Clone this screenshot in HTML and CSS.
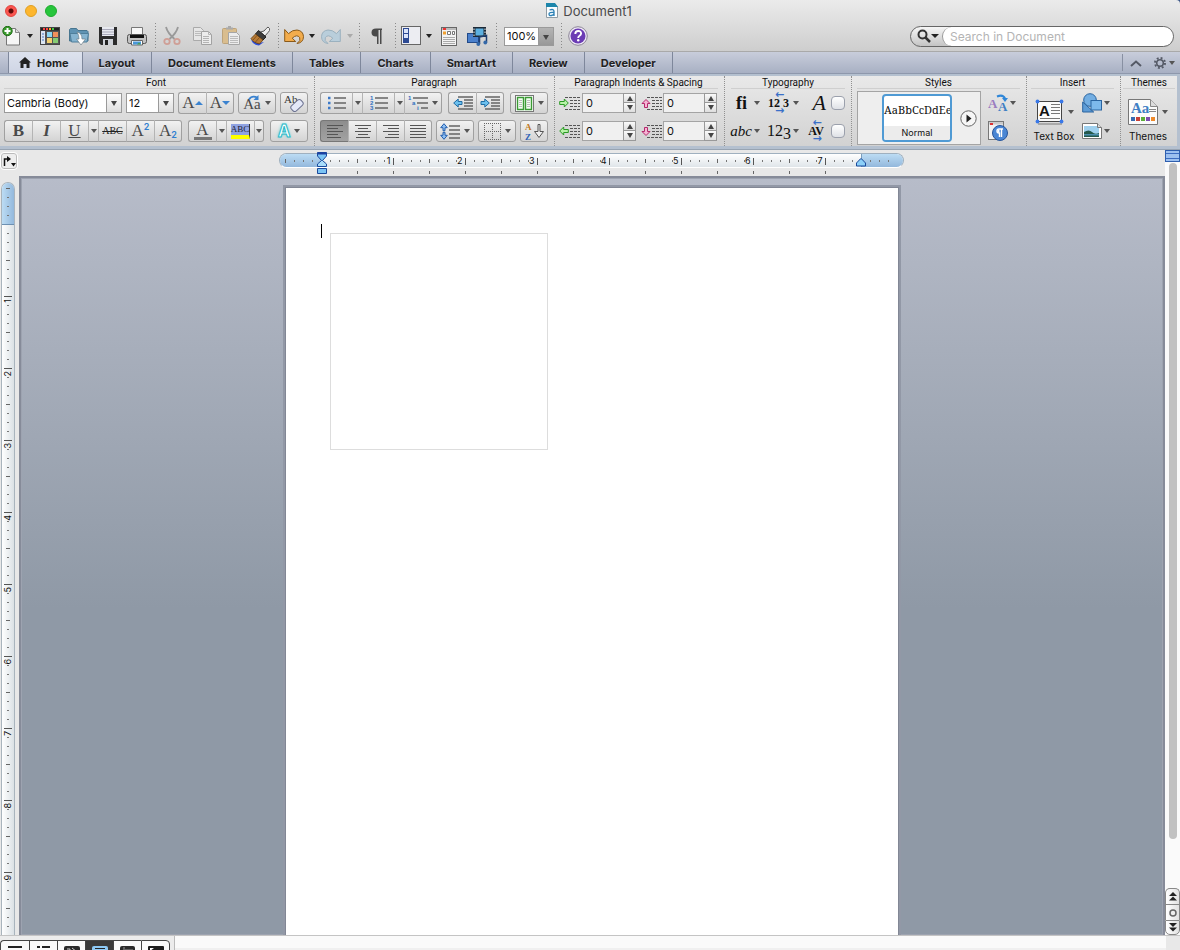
FILE: index.html
```html
<!DOCTYPE html>
<html lang="en">
<head>
    <meta charset="UTF-8">
    <meta name="viewport" content="width=device-width, initial-scale=1.0">
    <title>Document1</title>
    <link rel="stylesheet" href="styles.css">
</head>
<body>
<div class="window">

    <header class="titlebar">
        <div class="lights">
            <button class="light red" aria-label="Close"></button>
            <button class="light yellow" aria-label="Minimize"></button>
            <button class="light green" aria-label="Zoom"></button>
        </div>
        <div class="doc-title">
            <svg width="12" height="15" viewBox="0 0 12 15"><path d="M.5.5h8l3 3v11H.5z" fill="#fafdff" stroke="#8f9ba3"/><path d="M0 0h9l3 4H0z" fill="#1d86ab"/><path d="M3.500 7q4.500-1.500 4.500 1.500V13M8 9.500q-5-.5-5 1.500t2.500 1.500T8 10.500" fill="none" stroke="#2b80b5" stroke-width="1.300"/></svg>
            <span>Document1</span>
        </div>
        <div></div>
    </header>

    <div class="toolbar">
        <button class="tool first" aria-label="New">
            <svg width="20" height="20" viewBox="0 0 20 20"><path d="M4.500 2.500h9l4 4v12.500h-13z" fill="#f6f6f6" stroke="#777"/><path d="M13.500 2.500v4h4" fill="#ddd" stroke="#888"/><circle cx="5.500" cy="5" r="4.700" fill="#3a9a2c" stroke="#1f6b18"/><path d="M5.500 2v6M2.500 5h6" stroke="#fff" stroke-width="2"/></svg>
        </button>
        <button class="drop" aria-label="New options"><i class="arrow"></i></button>
        <button class="tool" aria-label="Template gallery">
            <svg width="20" height="20" viewBox="0 0 20 20"><rect x=".5" y="1.500" width="19" height="17" fill="#555" stroke="#444"/><path d="M1 2h18v2.500H1z" fill="#222"/><path d="M3 3h2M6 3h2" stroke="#f44" stroke-width="2"/><path d="M9 3h2" stroke="#fa3" stroke-width="2"/><path d="M12 3h2" stroke="#4c4" stroke-width="2"/><path d="M1 5h4v13H1z" fill="#dce6f2"/><path d="M2 8h2M2 11h2M2 14h2" stroke="#4a7ac0"/><rect x="7" y="6" width="5" height="5" fill="#8ad6f2"/><rect x="13" y="6" width="5" height="5" fill="#f2905c"/><rect x="7" y="12" width="5" height="5" fill="#f2d070"/><rect x="13" y="12" width="5" height="5" fill="#86cc74"/></svg>
        </button>
        <button class="tool" aria-label="Open">
            <svg width="20" height="20" viewBox="0 0 20 20"><path d="M.5 15V3.500l1-1h6l1.500 2h9l1 1V15z" fill="#5f93b3" stroke="#47758f"/><path d="M1 7.500h18.500L18 16H2.500z" fill="#86b4d0" stroke="#4f7f9b"/><path d="M8 6q5 1 5 7h3.500L12 19l-4.500-6H10q0-4-2-7z" fill="#fff" stroke="#6e7f8a" stroke-width=".7"/></svg>
        </button>
        <button class="tool" aria-label="Save">
            <svg width="20" height="20" viewBox="0 0 20 20"><path d="M1 1h18v18H3l-2-2z" fill="#2c2c2c"/><path d="M4 1h12v9H4z" fill="#e8eaf0"/><path d="M4 3.500h12M4 6h12M4 8.500h12" stroke="#aab"/><path d="M5 13h10v6H5z" fill="#cfd2d8"/><path d="M7 14h3v5H7z" fill="#222"/></svg>
        </button>
        <button class="tool" aria-label="Print">
            <svg width="20" height="20" viewBox="0 0 20 20"><path d="M4.500 1.500h11V9h-11z" fill="#f7f7f7" stroke="#777"/><rect x=".5" y="8.500" width="19" height="9" rx="2" fill="#c2c2c2" stroke="#555"/><path d="M3 9h14v3H3z" fill="#111"/><path d="M4.500 14.500h11v4.500h-11z" fill="#fff" stroke="#666"/><path d="M6 15.500h8v3H6z" fill="#4a98d8"/><path d="M10 18.500l2-2 2 2z" fill="#4aa04a"/></svg>
        </button>
        <span class="sep"></span>
        <button class="tool" disabled aria-label="Cut">
            <svg width="20" height="20" viewBox="0 0 20 20"><path d="M3 1q1.500 6 8.500 12M15 1q-1.500 6-8.500 12" fill="none" stroke="#999" stroke-width="1.800"/><circle cx="4" cy="15.500" r="2.700" fill="none" stroke="#cf9f96" stroke-width="1.800"/><circle cx="14" cy="15.500" r="2.700" fill="none" stroke="#cf9f96" stroke-width="1.800"/></svg>
        </button>
        <button class="tool" disabled aria-label="Copy">
            <svg width="20" height="20" viewBox="0 0 20 20"><path d="M1.500 1.500h7l3 3v10h-10z" fill="#e6e6e6" stroke="#aaa"/><path d="M3 5.500h6M3 7.500h6M3 9.500h6" stroke="#bbb"/><path d="M9.500 5.500h7l3 3v10h-10z" fill="#ececec" stroke="#a2a2a2"/><path d="M16.500 5.500v3h3M11 10.500h6M11 12.500h6M11 14.500h6M11 16.500h6" fill="none" stroke="#b4b4b4"/></svg>
        </button>
        <button class="tool" disabled aria-label="Paste">
            <svg width="20" height="20" viewBox="0 0 20 20"><rect x="1.500" y="2.500" width="14" height="15" rx="1" fill="#d9bd8e" stroke="#bda37a"/><path d="M5 3.500h7v-2h-2V0H7v1.500H5z" fill="#aaa"/><path d="M7.500 6.500h8l3 3v9h-11z" fill="#ececec" stroke="#a6a6a6"/><path d="M9 10.500h8M9 12.500h8M9 14.500h8M9 16.500h8" stroke="#bbb"/></svg>
        </button>
        <button class="tool" aria-label="Format painter">
            <svg width="20" height="20" viewBox="0 0 20 20"><path d="M1 14q6 4 13 2L9 19.500Q3 19 1 14z" fill="#2d4fe0"/><path d="M18 1l1.500 1.500q1 2-1.500 4L15 10l-4.500-4 3.500-1q2.500-3 4-4z" fill="#eee" stroke="#555"/><path d="M8.500 4.500L16 11l-3 3-7.500-6z" fill="#3c3c3c" stroke="#222"/><path d="M5.500 8l7.500 6-3.500 4Q3 16.500 1 12.500z" fill="#b87a34" stroke="#5e3a12" stroke-width=".8"/><path d="M7 9.500l-4 4.500M9.500 11.500l-4 4.500" stroke="#5e3a12" stroke-width=".6"/></svg>
        </button>
        <span class="sep"></span>
        <button class="tool narrow" aria-label="Undo">
            <svg width="20" height="18" viewBox="0 0 20 18"><path d="M.7 2.500v12h11l-3.500-3.300q5-4.500 7.500-.5 1.500 3-2.700 5.800 6.300-.8 6.500-6.800-.3-6-6.500-6.700-4.500-.3-8.500 3.600z" fill="#f2ac4c" stroke="#8a5a1a"/></svg>
        </button>
        <button class="drop" aria-label="Undo history"><i class="arrow"></i></button>
        <button class="tool mid" disabled aria-label="Redo">
            <svg width="20" height="18" viewBox="0 0 20 18"><path d="M19.300 2.500v12h-11l3.500-3.300q-5-4.500-7.500-.5-1.500 3 2.700 5.800Q.700 15.700.5 9.700.8 3.700 7 3q4.500-.3 8.500 3.600z" fill="#b9cedb" stroke="#9bb1bf"/></svg>
        </button>
        <button class="drop" disabled aria-label="Redo history"><i class="arrow dim"></i></button>
        <span class="sep"></span>
        <button class="tool" aria-label="Show formatting">
            <svg width="12" height="16" viewBox="0 0 12 16"><path d="M11 .500H5Q.500.500.500 4.500T5 8.500h1V16h1.500V2H9v14h1.500V2H11z" fill="#4a4a4a"/></svg>
        </button>
        <span class="sep"></span>
        <button class="tool narrow" aria-label="Sidebar">
            <svg width="20" height="20" viewBox="0 0 20 20"><rect x=".5" y=".5" width="19" height="18" fill="#ecedf2" stroke="#666"/><path d="M2 2h6v15H2z" fill="#2d4a94"/><path d="M3 3h4v4H3zM3 8h4v4H3z" fill="#dbe4fa"/></svg>
        </button>
        <button class="drop" aria-label="Sidebar options"><i class="arrow"></i></button>
        <button class="tool" aria-label="Toolbox">
            <svg width="16" height="19" viewBox="0 0 16 19"><rect x=".5" y=".5" width="15" height="18" fill="#f3f3f3" stroke="#666"/><path d="M1 1h14v2H1z" fill="#bbb"/><path d="M2 2h3" stroke="#e33" stroke-width="2"/><path d="M2 4.500h3v3H2z" fill="#f0a030"/><path d="M6.500 4.500h3v3h-3zM11.500 4.500h2v3h-2z" fill="#fff" stroke="#777"/><path d="M2 10.500h12M2 12.500h12M2 14.500h12M2 16.500h12" stroke="#aaa"/></svg>
        </button>
        <button class="tool" aria-label="Media browser">
            <svg width="21" height="19" viewBox="0 0 21 19"><rect x=".5" y="6.500" width="11" height="9" fill="#4a80cc" stroke="#234a88"/><rect x="6" y="0" width="13" height="10" fill="#1c2a38"/><rect x="8.500" y="1.500" width="8" height="7" fill="#5db0e0"/><path d="M7 1.500v8M18 1.500v8" stroke="#eee" stroke-dasharray="1.500 1.500"/><path d="M12.500 17V10l7-1.500v7" fill="none" stroke="#1e3f70" stroke-width="1.500"/><circle cx="11.300" cy="17" r="1.900" fill="#3468a8"/><circle cx="18.300" cy="15.500" r="1.900" fill="#3468a8"/></svg>
        </button>
        <span class="sep"></span>
        <span class="combo zoom"><select aria-label="Zoom"><option>100%</option></select></span>
        <span class="sep"></span>
        <button class="tool mid" aria-label="Help">
            <svg width="20" height="20" viewBox="0 0 20 20"><circle cx="10" cy="10" r="9.300" fill="#efeaf6" stroke="#8b8496"/><circle cx="10" cy="10" r="7.500" fill="#6b3cb4"/><path d="M7.300 8q0-3 2.900-3t2.900 2.600Q13.100 9 11.300 10 10.200 10.600 10.200 12" fill="none" stroke="#fff" stroke-width="1.900"/><circle cx="10.200" cy="14.300" r="1.200" fill="#fff"/></svg>
        </button>
        <div class="search">
            <button aria-label="Search options">
                <svg width="14" height="14" viewBox="0 0 14 14"><circle cx="5.500" cy="5.500" r="4" fill="none" stroke="#333" stroke-width="2"/><path d="M8.500 8.500L13 13" stroke="#333" stroke-width="2.500"/></svg>
                <i class="arrow"></i>
            </button>
            <input type="text" placeholder="Search in Document" aria-label="Search in Document">
        </div>
    </div>

    <nav class="tabs">
        <button class="tab active"><svg width="12" height="11" viewBox="0 0 12 11"><path d="M6 0l6 5.500h-1.500V11h-3V7h-3v4h-3V5.500H0z" fill="#222"/></svg>Home</button>
        <button class="tab">Layout</button>
        <button class="tab">Document Elements</button>
        <button class="tab">Tables</button>
        <button class="tab">Charts</button>
        <button class="tab">SmartArt</button>
        <button class="tab">Review</button>
        <button class="tab">Developer</button>
        <div class="tab-tools">
            <button aria-label="Collapse ribbon"><svg width="12" height="8" viewBox="0 0 12 8"><path d="M1 7l5-4.500L11 7" fill="none" stroke="#555a66" stroke-width="2"/></svg></button>
            <button aria-label="Ribbon settings"><svg width="12" height="12" viewBox="0 0 12 12"><circle cx="6" cy="6" r="3.300" fill="none" stroke="#555a66" stroke-width="1.600"/><circle cx="6" cy="6" r="5" fill="none" stroke="#555a66" stroke-width="2" stroke-dasharray="1.900 2.030"/></svg><i class="arrow grey"></i></button>
        </div>
    </nav>

    <div class="ribbon">
        <section class="group font">
            <h2>Font</h2>
            <div class="row">
                <span class="combo face"><select aria-label="Font"><option>Cambria (Body)</option></select></span>
                <span class="combo size"><select aria-label="Font size"><option>12</option></select></span>
                <div class="seg">
                    <button class="btn" aria-label="Grow font"><span class="glyph">A</span><i class="up"></i></button>
                    <button class="btn" aria-label="Shrink font"><span class="glyph">A</span><i class="down"></i></button>
                </div>
                <div class="seg"><button class="btn wide" aria-label="Change case">
                    <svg width="17" height="5" viewBox="0 0 17 5" class="case-arrow"><path d="M4 4.500Q7 0 12 2.500" fill="none" stroke="#3b83d0" stroke-width="1.800"/><path d="M13.500 0v5H8.500z" fill="#3b83d0"/></svg>
                    <span class="glyph small">Aa</span><i class="arrow grey"></i></button></div>
                <div class="seg"><button class="btn" aria-label="Clear formatting">
                    <svg width="20" height="18" viewBox="0 0 20 18"><text x="0" y="9" class="svg-serif" font-size="11">Ab</text><rect x="-6.500" y="-3.500" width="13" height="7" rx="2.500" transform="translate(13 11.500) rotate(-42)" fill="#e4e8f8" stroke="#6c7290"/></svg>
                </button></div>
            </div>
            <div class="row wide-gap">
                <div class="seg">
                    <button class="btn" aria-label="Bold"><b class="glyph">B</b></button>
                    <button class="btn" aria-label="Italic"><em class="glyph heavy">I</em></button>
                    <button class="btn" aria-label="Underline"><u class="glyph">U</u></button>
                    <button class="btn thin" aria-label="Underline style"><i class="arrow grey"></i></button>
                    <button class="btn" aria-label="Strikethrough"><s class="glyph tiny">ABC</s></button>
                    <button class="btn" aria-label="Superscript"><span class="glyph">A<sup>2</sup></span></button>
                    <button class="btn" aria-label="Subscript"><span class="glyph">A<sub>2</sub></span></button>
                </div>
                <div class="seg">
                    <button class="btn" aria-label="Font color"><span class="glyph bar">A</span></button>
                    <button class="btn thin" aria-label="Font color options"><i class="arrow grey"></i></button>
                    <button class="btn" aria-label="Highlight"><span class="glyph mark">ABC</span></button>
                    <button class="btn thin" aria-label="Highlight options"><i class="arrow grey"></i></button>
                </div>
                <div class="seg"><button class="btn wide" aria-label="Text effects"><span class="glow">A</span><i class="arrow grey"></i></button></div>
            </div>
        </section>

        <section class="group para">
            <h2>Paragraph</h2>
            <div class="row wide-gap">
                <div class="seg">
                    <button class="btn list" aria-label="Bullets"><svg width="18" height="14" viewBox="0 0 18 14"><path d="M6 2h12M6 7h12M6 12h12" stroke="#666" stroke-width="1.400"/><path d="M0 2h2.500M0 7h2.500M0 12h2.500" stroke="#3b78c8" stroke-width="2.500"/></svg></button>
                    <button class="btn thin" aria-label="Bullet styles"><i class="arrow grey"></i></button>
                    <button class="btn list" aria-label="Numbering"><svg width="18" height="16" viewBox="0 0 18 16"><path d="M5 3h13M5 8h13M5 13h13" stroke="#666" stroke-width="1.400"/><text x="0" y="5" class="svg-num">1</text><text x="0" y="10" class="svg-num">2</text><text x="0" y="15" class="svg-num">3</text></svg></button>
                    <button class="btn thin" aria-label="Number styles"><i class="arrow grey"></i></button>
                    <button class="btn wide" aria-label="Multilevel list"><svg width="20" height="16" viewBox="0 0 20 16"><path d="M5 3h15M9 8h11M13 13h7" stroke="#666" stroke-width="1.400"/><text x="0" y="5" class="svg-num">1</text><text x="4" y="10" class="svg-num">a</text><text x="9" y="15" class="svg-num">i</text></svg><i class="arrow grey"></i></button>
                </div>
                <div class="seg">
                    <button class="btn" aria-label="Decrease indent"><svg width="20" height="15" viewBox="0 0 20 15"><path d="M5 1h15M11 4h9M11 7h9M11 10h9M5 13h15" stroke="#666" stroke-width="1.300"/><path d="M.7 7l4.500-4v2.500H9v3H5.200V11z" fill="#6cc0ee" stroke="#1f6ca4"/></svg></button>
                    <button class="btn" aria-label="Increase indent"><svg width="20" height="15" viewBox="0 0 20 15"><path d="M5 1h15M11 4h9M11 7h9M11 10h9M5 13h15" stroke="#666" stroke-width="1.300"/><path d="M9.300 7l-4.500-4v2.500H1v3h3.800V11z" fill="#6cc0ee" stroke="#1f6ca4"/></svg></button>
                </div>
                <div class="seg"><button class="btn wide" aria-label="Columns"><svg width="19" height="17" viewBox="0 0 19 17"><rect x=".5" y=".5" width="18" height="16" fill="#fff" stroke="#777"/><path d="M2.500 2.500h6v12h-6zM10.500 2.500h6v12h-6z" fill="#f2fff0" stroke="#3b9a35" stroke-width="1.400"/><path d="M4 5.500h3M4 7.500h3M4 9.500h3M4 11.500h3M12 5.500h3M12 7.500h3M12 9.500h3M12 11.500h3" stroke="#bbb"/></svg><i class="arrow grey"></i></button></div>
            </div>
            <div class="row">
                <div class="seg">
                    <button class="btn pressed" aria-label="Align left"><svg width="16" height="14" viewBox="0 0 16 14"><path d="M0 1.500h16M0 4.500h11M0 7.500h16M0 10.500h11M0 13.500h14" stroke="#555"/></svg></button>
                    <button class="btn" aria-label="Center"><svg width="16" height="14" viewBox="0 0 16 14"><path d="M0 1.500h16M3 4.500h10M0 7.500h16M3 10.500h10M1 13.500h14" stroke="#555"/></svg></button>
                    <button class="btn" aria-label="Align right"><svg width="16" height="14" viewBox="0 0 16 14"><path d="M0 1.500h16M5 4.500h11M0 7.500h16M5 10.500h11M2 13.500h14" stroke="#555"/></svg></button>
                    <button class="btn" aria-label="Justify"><svg width="16" height="14" viewBox="0 0 16 14"><path d="M0 1.500h16M0 4.500h16M0 7.500h16M0 10.500h16M0 13.500h16" stroke="#555"/></svg></button>
                </div>
                <div class="seg"><button class="btn wide" aria-label="Line spacing"><svg width="20" height="17" viewBox="0 0 20 17"><path d="M9 3h11M9 7h11M9 11h11M9 15h11" stroke="#666" stroke-width="1.400"/><path d="M4 .7l3.300 4H5v3H3v-3H.7zM4 16.300l3.300-4H5v-3H3v3H.7z" fill="#8fc0f4" stroke="#245fae"/></svg><i class="arrow grey"></i></button></div>
                <div class="seg"><button class="btn wide" aria-label="Borders"><svg width="17" height="17" viewBox="0 0 17 17"><path d="M0 .5h17M0 16.500h17M.5 0v17M16.500 0v17M8.500 0v17M0 8.500h17" fill="none" stroke="#666" stroke-dasharray="1 1"/></svg><i class="arrow grey"></i></button></div>
                <div class="seg"><button class="btn" aria-label="Sort"><svg width="21" height="20" viewBox="0 0 21 20"><text x="1" y="9" font-size="9" class="svg-serif az-a">A</text><text x="1" y="19" font-size="9" class="svg-serif az-z">Z</text><path d="M14 3.500h2v7h3.500L15 16.500l-4.500-6H14z" fill="#eee" stroke="#555"/></svg></button></div>
            </div>
        </section>

        <section class="group indents">
            <h2>Paragraph Indents &amp; Spacing</h2>
            <div class="row">
                <label class="spin"><svg width="21" height="15" viewBox="0 0 21 15"><path d="M6 1.500h15M11 4.500h10M11 7.500h10M11 10.500h10M6 13.500h15" stroke="#555" stroke-dasharray="3 1"/><path d="M9.300 7l-4-4v2.500H.7v3h4.600V11z" fill="#b8f2a8" stroke="#2a9a24"/></svg>
                    <input type="text" value="0" aria-label="Left indent"><span class="steps"><button aria-label="Up"></button><button aria-label="Down"></button></span></label>
                <label class="spin"><svg width="21" height="15" viewBox="0 0 21 15"><path d="M6 1.500h15M11 4.500h10M11 7.500h10M11 10.500h10M6 13.500h15" stroke="#555" stroke-dasharray="3 1"/><path d="M5 3.500l4 4H6.500v4h-3v-4H1z" fill="#f6b4d4" stroke="#b4286c"/></svg>
                    <input type="text" value="0" aria-label="Space before"><span class="steps"><button aria-label="Up"></button><button aria-label="Down"></button></span></label>
            </div>
            <div class="row">
                <label class="spin"><svg width="21" height="15" viewBox="0 0 21 15"><path d="M6 1.500h15M11 4.500h10M11 7.500h10M11 10.500h10M6 13.500h15" stroke="#555" stroke-dasharray="3 1"/><path d="M.7 7l4-4v2.500h4.600v3H4.700V11z" fill="#b8f2a8" stroke="#2a9a24"/></svg>
                    <input type="text" value="0" aria-label="Right indent"><span class="steps"><button aria-label="Up"></button><button aria-label="Down"></button></span></label>
                <label class="spin"><svg width="21" height="15" viewBox="0 0 21 15"><path d="M6 1.500h15M11 4.500h10M11 7.500h10M11 10.500h10M6 13.500h15" stroke="#555" stroke-dasharray="3 1"/><path d="M5 11.500l4-4H6.500v-4h-3v4H1z" fill="#f6b4d4" stroke="#b4286c"/></svg>
                    <input type="text" value="0" aria-label="Space after"><span class="steps"><button aria-label="Up"></button><button aria-label="Down"></button></span></label>
            </div>
        </section>

        <section class="group typo">
            <h2>Typography</h2>
            <div class="row">
                <button class="plain" aria-label="Ligatures"><span class="type fi">fi</span><i class="arrow grey"></i></button>
                <button class="plain" aria-label="Number spacing"><span class="type num spread">12 3</span><i class="arrow grey"></i></button>
                <label class="check"><em class="type swash">A</em><input type="checkbox" aria-label="Contextual alternates"></label>
            </div>
            <div class="row">
                <button class="plain" aria-label="Stylistic sets"><em class="type abc">abc</em><i class="arrow grey"></i></button>
                <button class="plain" aria-label="Number forms"><span class="type old">12<span>3</span></span><i class="arrow grey"></i></button>
                <label class="check"><span class="type num spread">AV</span><input type="checkbox" aria-label="Kerning"></label>
            </div>
        </section>

        <section class="group styles">
            <h2>Styles</h2>
            <div class="style-area">
                <div class="gallery">
                    <button class="thumb"><span class="sample">AaBbCcDdEe</span><span class="caption">Normal</span></button>
                    <button class="next" aria-label="More styles"><svg width="17" height="17" viewBox="0 0 17 17"><circle cx="8.500" cy="8.500" r="7.700" fill="#f6f6f6" stroke="#666"/><path d="M6.500 4.500v8l5-4z" fill="#222"/></svg></button>
                </div>
                <div class="stack">
                    <button class="plain" aria-label="Change styles"><svg width="20" height="20" viewBox="0 0 20 20"><text x="0" y="15" font-size="13" class="svg-serif violet">A</text><text x="10" y="18" font-size="13" class="svg-serif blue">A</text><path d="M9 3.500q6-2.500 8 2" fill="none" stroke="#2f86d8" stroke-width="2"/><path d="M14 5h6l-3 4z" fill="#2f86d8"/></svg><i class="arrow grey"></i></button>
                    <button class="plain" aria-label="Styles pane"><svg width="20" height="20" viewBox="0 0 20 20"><rect x=".5" y=".5" width="15" height="18" fill="#f3f3f3" stroke="#777"/><path d="M1 1h14v2.500H1z" fill="#ccc"/><path d="M2 2h3v2H2z" fill="#d33"/><circle cx="12" cy="12" r="7.500" fill="#4a86d4" stroke="#27559b"/><path d="M15 8h-4q-2 0-2 2t2 2h.500v4M13.500 8v8" fill="none" stroke="#fff" stroke-width="1.400"/><path d="M11.500 8.500v3H11q-1.500 0-1.500-1.500t1.500-1.500z" fill="#fff"/></svg></button>
                </div>
            </div>
        </section>

        <section class="group insert">
            <h2>Insert</h2>
            <div class="insert-area">
                <button class="big">
                    <span class="pic"><svg width="29" height="26" viewBox="0 0 29 26"><path d="M3 24h24v2H3z" fill="#aaa"/><rect x="2.500" y="2.500" width="24" height="20" fill="#fbfbfb" stroke="#444"/><text x="4" y="17" font-size="15" font-weight="700" font-family="Liberation Sans, sans-serif" fill="#111">A</text><path d="M16 5.500h9M16 8.500h9M16 11.500h9M16 14.500h9M5 19.500h20" stroke="#777"/><g fill="#3a78e8"><circle cx="2.500" cy="2.500" r="1.900"/><circle cx="26.500" cy="2.500" r="1.900"/><circle cx="2.500" cy="22.500" r="1.900"/><circle cx="26.500" cy="22.500" r="1.900"/></g></svg><i class="arrow grey"></i></span>
                    <span>Text Box</span>
                </button>
                <div class="stack">
                    <button class="plain" aria-label="Shapes"><svg width="20" height="20" viewBox="0 0 20 20"><path d="M.7 9v10h11z" fill="#5e9cd6" stroke="#2a64a0"/><circle cx="8" cy="7" r="6.300" fill="#73aee2" stroke="#2a64a0"/><rect x="9" y="7.500" width="10.500" height="9.500" fill="#7db9ec" stroke="#2a64a0"/></svg><i class="arrow grey"></i></button>
                    <button class="plain" aria-label="Picture"><svg width="20" height="16" viewBox="0 0 20 16"><path d="M.5.5h15l4 4v11H.5z" fill="#fff" stroke="#777"/><path d="M2 3h13l2 2.500V14H2z" fill="#9fd0ee"/><path d="M2 9q5-3 8 0t7 1v4H2z" fill="#24584c"/><path d="M2 11h15v1.500H2z" fill="#4a8fb0"/><path d="M15.500.5v4h4" fill="#ddd" stroke="#777"/></svg><i class="arrow grey"></i></button>
                </div>
            </div>
        </section>

        <section class="group themes">
            <h2>Themes</h2>
            <div class="insert-area">
                <button class="big">
                    <span class="pic"><svg width="30" height="26" viewBox="0 0 30 26"><path d="M.5.5h22l7 7v18H.5z" fill="#fcfcfc" stroke="#777"/><path d="M22.500.5v7h7" fill="#ddd" stroke="#888"/><text x="3" y="14" font-size="15" class="svg-serif blue">Aa</text><path d="M21 10.500h7M21 12.500h7" stroke="#888"/><path d="M3 18h4v4H3z" fill="#3a6ab0"/><path d="M8 18h4v4H8z" fill="#c84038"/><path d="M13 18h4v4h-4z" fill="#5cae3c"/><path d="M18 18h4v4h-4z" fill="#7d4cae"/><path d="M23 18h4v4h-4z" fill="#ee8a2c"/></svg><i class="arrow grey"></i></span>
                    <span>Themes</span>
                </button>
            </div>
        </section>
    </div>

    <main class="work">
        <div class="tab-stop"><button aria-label="Tab stop"><svg width="15" height="14" viewBox="0 0 15 14"><path d="M2.500 12V5H6" fill="none" stroke="#111" stroke-width="1.500"/><path d="M5 2l4 3-4 3z" fill="#111"/><path d="M9 9h5l-2.500 3.500z" fill="#111"/></svg></button></div>

        <div class="ruler-row">
            <div class="ruler">
                <span class="margin left"></span>
                <span class="inch">1</span><span class="inch">2</span><span class="inch">3</span><span class="inch">4</span><span class="inch">5</span><span class="inch">6</span><span class="inch">7</span><span class="inch part"></span>
                <span class="margin right"></span>
                <svg class="marker start" width="10" height="22" viewBox="0 0 10 22"><path d="M.5.500h9V4L5.500 8.500h-1L.500 4z" fill="#7cc4f4" stroke="#1a4a9c"/><path d="M.500 14.500V12L4.500 8.500h1L9.500 12v2.500z" fill="#a8dcfa" stroke="#1a4a9c"/><path d="M.500 16.500h9v5h-9z" fill="#7cc4f4" stroke="#1a4a9c"/><path d="M.5 1.500h9" stroke="#1c3fa0" stroke-width="2"/></svg>
                <svg class="marker end" width="10" height="9" viewBox="0 0 10 9"><path d="M.500 8V5L4.500 .800h1L9.500 5v3z" fill="#8cd0f8" stroke="#1a4a9c"/></svg>
            </div>
            <div class="stops"></div>
        </div>

        <div class="side">
            <button class="split" aria-label="Split"></button>
            <div class="track"><div class="knob"></div></div>
            <div class="jump">
                <button aria-label="Previous page"><svg width="8" height="9" viewBox="0 0 8 9"><path d="M4 0l4 4H0zM4 4.500l4 4H0z" fill="#222"/></svg></button>
                <button aria-label="Browse object"><svg width="8" height="8" viewBox="0 0 8 8"><circle cx="4" cy="4" r="3" fill="#eee" stroke="#666" stroke-width="1.500"/></svg></button>
                <button aria-label="Next page"><svg width="8" height="9" viewBox="0 0 8 9"><path d="M4 4L0 0h8zM4 8.500l-4-4h8z" fill="#222"/></svg></button>
            </div>
        </div>

        <div class="v-ruler">
            <div class="v-scale">
                <div class="v-margin"></div>
                <div class="v-inch"></div>
                <div class="v-inch"><span>1</span></div>
                <div class="v-inch"><span>2</span></div>
                <div class="v-inch"><span>3</span></div>
                <div class="v-inch"><span>4</span></div>
                <div class="v-inch"><span>5</span></div>
                <div class="v-inch"><span>6</span></div>
                <div class="v-inch"><span>7</span></div>
                <div class="v-inch"><span>8</span></div>
                <div class="v-inch"><span>9</span></div>
            </div>
        </div>

        <div class="canvas">
            <div class="page">
                <div class="caret"></div>
                <div class="text-box"></div>
            </div>
        </div>
    </main>

    <footer class="bottom">
        <div class="views">
            <button aria-label="Draft"><svg width="14" height="12" viewBox="0 0 14 12"><path d="M0 1h14M0 5h14M0 9h10" stroke="#222" stroke-width="2"/></svg></button>
            <button aria-label="Outline"><svg width="14" height="12" viewBox="0 0 14 12"><path d="M0 1h3M5 1h8M3 5h3M8 5h6" stroke="#222" stroke-width="2"/></svg></button>
            <button aria-label="Publishing"><svg width="16" height="12" viewBox="0 0 16 12"><rect width="16" height="12" rx="2" fill="#2a2a2a"/><path d="M3 3h3v3M8 2l5 4" stroke="#ccc" fill="none"/></svg></button>
            <button class="on" aria-label="Print layout"><svg width="16" height="12" viewBox="0 0 16 12"><rect width="16" height="12" rx="2" fill="#8cc8f4"/><path d="M3 2.500h10M3 5h10" stroke="#222"/></svg></button>
            <button aria-label="Notebook"><svg width="15" height="12" viewBox="0 0 15 12"><rect width="15" height="12" rx="2" fill="#2a2a2a"/><path d="M4 1v10M5 4h8" stroke="#999"/></svg></button>
            <button aria-label="Full screen"><svg width="16" height="12" viewBox="0 0 16 12"><rect width="16" height="12" rx="1" fill="#1c1c1c"/><path d="M2 2h4L2 5z" fill="#fff"/></svg></button>
        </div>
        <div class="h-track"></div>
        <div class="corner"></div>
    </footer>
</div>
</body>
</html>
```
FILE: styles.css
```css
* {
    box-sizing: border-box;
}
body {
    margin: 0;
    background: #3c5687;
    font-family: Inter, "Open Sans", sans-serif;
    font-size: 11px;
    color: #111;
}
button, input, select {
    font: inherit;
    color: inherit;
    margin: 0;
    padding: 0;
}
button {
    border: 0;
    background: none;
    display: flex;
    align-items: center;
    justify-content: center;
}
svg {
    display: block;
    flex: none;
}
.window {
    display: flex;
    flex-direction: column;
    height: 100vh;
    overflow: hidden;
    border-top-right-radius: 4px;
    background: linear-gradient(#ebebeb, #cdcdcd 52px);
}

/* title bar */
.titlebar {
    display: grid;
    grid-template-columns: 1fr auto 1fr;
    align-items: center;
    height: 21px;
}
.lights {
    display: flex;
    gap: 8px;
    padding-left: 5px;
}
.light {
    width: 12px;
    height: 12px;
    border-radius: 50%;
}
.red {
    background: radial-gradient(circle, #5c0a08 2px, #fc5650 3px);
    border: 1px solid #e0443e;
}
.yellow {
    background: #fdb62e;
    border: 1px solid #dfa023;
}
.green {
    background: #27c53c;
    border: 1px solid #1eab2e;
}
.doc-title {
    display: flex;
    gap: 5px;
    align-items: center;
    padding-right: 2px;
    font-size: 13px;
    line-height: 20px;
    color: #4a4a4a;
}

/* standard toolbar */
.toolbar {
    display: flex;
    align-items: center;
    height: 31px;
    flex: none;
    padding-right: 6px;
    border-bottom: 1px solid #a9a9a9;
}
.tool {
    width: 29px;
    height: 24px;
}
.tool.first {
    width: 24px;
}
.tool.narrow {
    width: 25px;
}
.tool.mid {
    width: 27px;
}
.drop {
    width: 11px;
    height: 24px;
}
.sep {
    width: 7px;
    height: 26px;
    background: repeating-linear-gradient(#8a8a8a 0 1px, transparent 1px 3px) 4px 0 / 1px 100% no-repeat;
}
.arrow {
    flex: none;
    border: 3px solid transparent;
    border-top: 4px solid #222;
    border-bottom: 0;
}
.arrow.grey {
    border-top-color: #555;
}
.arrow.dim {
    border-top-color: #aaa;
}
.combo {
    position: relative;
    display: block;
    height: 20px;
}
.combo select {
    appearance: none;
    width: 100%;
    height: 100%;
    padding-left: 2px;
    border: 1px solid #9a9a9a;
    border-radius: 0;
    background: #fff;
    font-size: 11px;
}
.combo::before, .combo::after {
    content: "";
    position: absolute;
    pointer-events: none;
}
.combo::after {
    top: 1px;
    right: 1px;
    bottom: 1px;
    width: 14px;
    border-left: 1px solid #9a9a9a;
    background: linear-gradient(#fdfdfd, #dedede);
}
.combo::before {
    z-index: 1;
    top: 8px;
    right: 5px;
    border: 3px solid transparent;
    border-top: 5px solid #444;
    border-bottom: 0;
}
.combo.zoom {
    width: 50px;
    height: 19px;
    margin: 0 3px 0 5px;
}
.combo.zoom::after {
    background: linear-gradient(#b4b4b4, #989898);
}
.combo.face {
    width: 118px;
}
.combo.size {
    width: 48px;
}
.search {
    display: flex;
    width: 264px;
    height: 21px;
    margin-left: auto;
    border: 1px solid #666;
    border-radius: 11px;
    background: linear-gradient(#f6f6f6, #c4c4c4);
    overflow: hidden;
}
.search button {
    width: 31px;
    padding-left: 2px;
}
.search .arrow {
    border-width: 4px 4px 0;
}
.search input {
    flex: 1;
    min-width: 0;
    padding: 0 7px;
    border: 0;
    border-left: 1px solid #999;
    border-radius: 11px;
    background: #fff;
    font-size: 12px;
    outline: 0;
}
.search input::placeholder {
    color: #b4b4b4;
}

/* ribbon tabs */
.tabs {
    display: flex;
    flex: none;
    height: 22px;
    padding-left: 8px;
    background: linear-gradient(#c8cddb, #a8b0c3);
    border-bottom: 1px solid #8e98ac;
}
.tab {
    padding: 0 16px;
    border-right: 1px solid #7e879b;
    font-weight: 700;
    color: #222;
    text-shadow: 0 1px 0 #d6dae4;
    white-space: nowrap;
}
.tab.active {
    gap: 6px;
    padding: 0 13px 0 10px;
    border-left: 1px solid #7e879b;
    background: linear-gradient(#dde2ee, #cfd5e4);
}
.tab-tools {
    display: flex;
    align-items: center;
    gap: 12px;
    margin: 2px 5px 2px auto;
    padding-left: 7px;
    border-left: 1px solid #8890a2;
}
.tab-tools button {
    gap: 3px;
}

/* ribbon */
.ribbon {
    display: flex;
    flex: none;
    height: 75px;
    border: solid #b4c0cf;
    border-width: 2px 3px 3px 0;
    background: linear-gradient(#e9e9e9, #d2d2d2);
}
.group {
    flex: none;
    border-right: 1px dotted #909090;
}
.group h2 {
    height: 13px;
    margin: 0 6px 3px 0;
    border-bottom: 1px solid #cfcfcf;
    font: 10px/14px Roboto, sans-serif;
    text-align: center;
    white-space: nowrap;
}
.row {
    display: flex;
    align-items: center;
    gap: 4px;
    height: 22px;
    margin-bottom: 6px;
}
.row.wide-gap {
    gap: 6px;
}
.font {
    width: 315px;
    padding-left: 4px;
}
.para {
    width: 240px;
    padding-left: 5px;
}
.indents {
    width: 170px;
    padding-left: 4px;
}
.typo {
    width: 127px;
    padding-left: 6px;
}
.styles {
    flex: 1;
    padding-left: 5px;
}
.insert {
    width: 94px;
    padding-left: 4px;
}
.themes {
    width: 56px;
    border-right: 0;
}
.group.themes h2 {
    margin: 0 2px 3px;
}
.seg {
    display: flex;
}
.btn {
    width: 28px;
    height: 22px;
    border: 1px solid #a0a0a0;
    border-right-width: 0;
    background: linear-gradient(#f2f2f2, #d4d4d4);
}
.btn + .btn {
    border-left-color: #b4b4b4;
}
.btn:first-child {
    border-radius: 3px 0 0 3px;
}
.btn:last-child {
    border-right-width: 1px;
    border-radius: 0 3px 3px 0;
}
.btn:only-child {
    border-radius: 3px;
}
.btn.thin {
    width: 10px;
}
.btn.list {
    width: 32px;
}
.btn.wide {
    position: relative;
    width: 38px;
    gap: 4px;
}
.btn.pressed {
    background: linear-gradient(#8d8d8d, #a2a2a2);
    border-color: #777;
}
.glyph {
    font-family: "Liberation Serif", serif;
    font-size: 17px;
    line-height: 20px;
    color: #4a4a4a;
}
.glyph.heavy {
    font-weight: 700;
}
.glyph.small {
    padding-top: 3px;
    font-size: 15px;
    line-height: 17px;
}
.glyph.tiny {
    font-size: 10px;
    color: #222;
}
.glyph sup, .glyph sub {
    font-family: Inter, sans-serif;
    font-size: 9px;
    font-weight: 600;
    line-height: 1px;
    color: #2f7fd0;
}
.glyph sup {
    vertical-align: 6px;
}
.glyph sub {
    vertical-align: -2px;
}
.glyph.bar {
    width: 18px;
    height: 18px;
    border-bottom: 3px solid #777;
    line-height: 15px;
}
.glyph.mark {
    height: 15px;
    border-bottom: 4px solid #ff0;
    border-right: 1px solid #333;
    background: #8fa2e2;
    font-size: 9px;
    line-height: 11px;
    color: #223;
}
.glow {
    font-size: 17px;
    font-weight: 700;
    line-height: 18px;
    color: #fff;
    -webkit-text-stroke: 1px #29b9c8;
    text-shadow: 0 0 3px #35d0de;
}
.up, .down {
    border: 4px solid transparent;
    border-top: 0;
    border-bottom: 4px solid #3b83d0;
}
.down {
    border-bottom: 0;
    border-top: 4px solid #3b83d0;
}
.case-arrow {
    position: absolute;
    top: 2px;
    left: 6px;
}
.svg-serif {
    font-family: "Liberation Serif", serif;
    fill: #333;
}
.svg-num {
    font: 700 6px "Liberation Sans", sans-serif;
    fill: #2f6fc0;
}
.az-a {
    font-weight: 700;
    fill: #c07a1c;
}
.az-z {
    font-weight: 700;
    fill: #2f62b8;
}
.violet {
    font-weight: 700;
    fill: #9a7cc0;
}
.blue {
    font-weight: 700;
    fill: #3f7fc4;
}

.indents .row {
    gap: 5px;
}
.spin {
    display: flex;
    align-items: center;
}
.spin svg {
    margin-right: 2px;
}
.spin input {
    width: 41px;
    height: 20px;
    padding: 0 3px;
    border: 1px solid #a4a4a4;
    border-right: 0;
    background: #f0f0f0;
}
.spin:last-child svg {
    margin-right: 1px;
}
.steps button {
    width: 13px;
    height: 10px;
    border: 1px solid #999;
    background: linear-gradient(#fafafa, #dedede);
}
.steps button + button {
    border-top: 0;
}
.steps button::after {
    content: "";
    border: 3px solid transparent;
    border-top: 0;
    border-bottom: 5px solid #444;
}
.steps button + button::after {
    border-bottom: 0;
    border-top: 5px solid #444;
}

.typo .row {
    display: grid;
    grid-template-columns: 29px 37px 1fr;
    gap: 2px;
}
.plain {
    gap: 2px;
    height: 22px;
    justify-content: flex-end;
}
.type {
    font-family: "Liberation Serif", serif;
    font-size: 16px;
    line-height: 20px;
    color: #111;
}
.type.fi {
    padding-right: 5px;
    font-size: 18px;
    font-weight: 700;
}
.type.abc {
    font-size: 15px;
}
.type.num {
    position: relative;
    padding-right: 2px;
    font-size: 12px;
    font-weight: 700;
    line-height: 12px;
}
.spread::before, .spread::after {
    content: "←";
    position: absolute;
    top: -6px;
    left: 0;
    right: 0;
    text-align: center;
    font: 700 11px/8px "DejaVu Sans", sans-serif;
    color: #3a70c8;
}
.spread::after {
    content: "→";
    top: 10px;
}
.type.old span {
    position: relative;
    top: 3px;
}
.type.swash {
    font-size: 22px;
}
.check {
    display: flex;
    align-items: center;
    justify-content: flex-end;
    gap: 5px;
    padding-right: 6px;
}
.check input {
    appearance: none;
    width: 14px;
    height: 14px;
    border: 1px solid #9ba0ac;
    border-radius: 4px;
    background: linear-gradient(#fff, #dfe1e6);
}

.style-area, .insert-area {
    display: flex;
    align-items: flex-start;
}
.gallery {
    display: flex;
    flex: 1;
    align-items: center;
    justify-content: flex-end;
    gap: 8px;
    height: 54px;
    margin-top: -1px;
    padding-right: 3px;
    border: 1px solid #a4a4a4;
    background: #eee;
}
.thumb {
    flex-direction: column;
    width: 70px;
    height: 48px;
    border: 2px solid #4f9ad4;
    border-radius: 4px;
    background: #fff;
    overflow: hidden;
}
.sample {
    flex: 1;
    width: 66px;
    overflow: hidden;
    font: 11px/28px "Noto Serif", "Liberation Serif", serif;
    white-space: nowrap;
    text-align: left;
}
.caption {
    width: 100%;
    font-size: 9px;
    line-height: 14px;
    background: #ececec;
}
.stack {
    display: flex;
    flex-direction: column;
    gap: 6px;
    width: 38px;
    padding-left: 7px;
}
.stack .plain {
    justify-content: flex-start;
}
.styles .stack {
    width: 45px;
}
.insert .stack {
    padding-left: 5px;
}
.big {
    flex-direction: column;
    gap: 5px;
    width: 46px;
    height: 50px;
    margin-top: 3px;
    font-size: 10px;
    line-height: 12px;
    white-space: nowrap;
}
.themes .big {
    width: 54px;
}
.pic {
    display: flex;
    align-items: center;
    gap: 4px;
}

/* rulers, page and scroll bars */
.work {
    display: grid;
    grid-template-columns: 19px 1fr 15px;
    grid-template-rows: 26px 1fr;
    flex: 1;
    min-height: 0;
    background: #e8e8e8;
    border-top: 1px solid #98a4b2;
}
.tab-stop {
    padding-top: 2px;
}
.tab-stop button {
    width: 18px;
    height: 18px;
    border: 1px solid #fff;
    border-radius: 4px;
    background: #eee;
    box-shadow: inset 0 0 0 1px #bbb;
}
.ruler-row {
    display: flex;
    flex-direction: column;
    align-items: center;
    padding-top: 3px;
}
.ruler {
    position: relative;
    display: flex;
    width: 625px;
    height: 15px;
    margin-right: 2px;
    border: 1px solid #9fb0bf;
    border-bottom-color: #fff;
    border-radius: 8px;
    background: linear-gradient(#fff, #dfe5e9);
    font-size: 9px;
}
.inch, .margin {
    height: 13px;
}
.inch {
    width: 72px;
    padding-right: 3px;
    background:
        linear-gradient(#555, #555) 71px 4px / 1px 7px no-repeat,
        linear-gradient(#666, #666) 35px 5px / 1px 4px no-repeat,
        repeating-linear-gradient(90deg, transparent 0 8px, #777 8px 9px) 0 6px / 100% 2px no-repeat;
    line-height: 14px;
    text-align: right;
}
.inch.part {
    width: 35px;
}
.margin.left {
    width: 42px;
    border-radius: 7px 0 0 7px;
    background:
        linear-gradient(#666, #666) 5px 5px / 1px 4px no-repeat,
        repeating-linear-gradient(90deg, transparent 0 8px, #777 8px 9px) 6px 6px / 100% 2px no-repeat,
        linear-gradient(#bcdcf4, #93b8dc);
}
.margin.right {
    flex: 1;
    border-left: 1px solid #7c9dbb;
    border-radius: 0 7px 7px 0;
    background:
        repeating-linear-gradient(90deg, transparent 0 8px, #777 8px 9px) 0 6px / 27px 2px no-repeat,
        linear-gradient(#bcdcf4, #93b8dc);
}
.marker {
    position: absolute;
}
.marker.start {
    top: -2px;
    left: 37px;
}
.marker.end {
    bottom: 0;
    right: 37px;
}
.stops {
    width: 540px;
    height: 3px;
    margin-top: 3px;
    background: repeating-linear-gradient(90deg, transparent 0 35px, #666 35px 36px) 0 0 / 504px 100% no-repeat;
}
.v-ruler {
    overflow: hidden;
    padding: 6px 4px 0 1px;
}
.v-scale {
    height: 100%;
    border: 1px solid #a9b4bd;
    border-bottom: 0;
    border-radius: 8px 8px 0 0;
    background: linear-gradient(90deg, #fff, #dbe1e5);
    font-size: 9px;
}
.v-margin {
    height: 42px;
    border-bottom: 1px solid #6d90b2;
    border-radius: 7px 7px 0 0;
    background:
        linear-gradient(#666, #666) 4px 5px / 4px 1px no-repeat,
        repeating-linear-gradient(transparent 0 8px, #777 8px 9px) 5px 6px / 2px 100% no-repeat,
        linear-gradient(90deg, #bcdcf4, #93b8dc);
}
.v-inch {
    height: 72px;
    padding-top: 2px;
    background:
        linear-gradient(#555, #555) 2px 71px / 8px 1px no-repeat,
        linear-gradient(#666, #666) 4px 35px / 4px 1px no-repeat,
        repeating-linear-gradient(transparent 0 8px, #777 8px 9px) 5px 0 / 2px 100% no-repeat;
}
.v-inch span {
    display: block;
    width: 12px;
    line-height: 12px;
    writing-mode: vertical-rl;
    transform: rotate(180deg);
}
.canvas {
    display: flex;
    justify-content: center;
    overflow: hidden;
    padding-top: 10px;
    border: solid #868b99;
    border-width: 2px 2px 0;
    background: linear-gradient(#b7bcc9, #8f99a6 430px);
    box-shadow: inset 0 0 0 1px #9da3b0;
}
.page {
    position: relative;
    flex: none;
    width: 612px;
    height: 792px;
    padding: 36px;
    background: #fff;
    box-shadow: 0 0 0 1px #828795, 0 0 0 3px #9298a6;
}
.caret {
    width: 1px;
    height: 14px;
    margin-left: -1px;
    background: #000;
}
.text-box {
    position: absolute;
    top: 45px;
    left: 44px;
    width: 218px;
    height: 217px;
    border: 1px solid #ddd;
}
.side {
    grid-column: 3;
    grid-row: 1 / 3;
    display: flex;
    flex-direction: column;
    min-height: 0;
    background: #fafafa;
}
.split {
    height: 12px;
    border: 1px solid #2f5fae;
    background: repeating-linear-gradient(#9cc0f0 0 2px, #3c6cc0 2px 3px, #9cc0f0 3px 5px);
}
.track {
    flex: 1;
    padding: 1px 3px 49px 4px;
}
.knob {
    height: 100%;
    border-radius: 4px;
    background: #c1c1c1;
}
.jump button {
    width: 15px;
    height: 16px;
    border: 1px solid #888;
    border-bottom: 0;
    background: linear-gradient(90deg, #fff, #e2e2e2);
}
.jump button:first-child {
    border-radius: 5px 5px 0 0;
}
.jump button:last-child {
    height: 15px;
    border-bottom: 1px solid #888;
    border-radius: 0 0 5px 5px;
}

/* bottom strip */
.bottom {
    display: flex;
    flex: none;
    height: 15px;
    overflow: hidden;
    background: #ececec;
    border-top: 1px solid #c4c4c4;
}
.views {
    display: flex;
    align-items: flex-start;
    width: 175px;
    padding-top: 4px;
    border-right: 1px solid #bbb;
}
.views button {
    width: 28px;
    height: 22px;
    border: 1px solid #444;
    border-right: 0;
    align-items: flex-start;
    padding-top: 5px;
    background: #fafafa;
}
.views button:first-child {
    width: 29px;
    border-top-left-radius: 4px;
}
.views button:last-child {
    width: 29px;
    border-right: 1px solid #444;
    border-top-right-radius: 4px;
}
.views .on {
    background: #3a3a3a;
}
.h-track {
    flex: 1;
    background: linear-gradient(#fafafa 12px, #e6e6e6 13px, #fafafa 14px);
}
.corner {
    width: 14px;
    background: #e8e8e8;
}
```
